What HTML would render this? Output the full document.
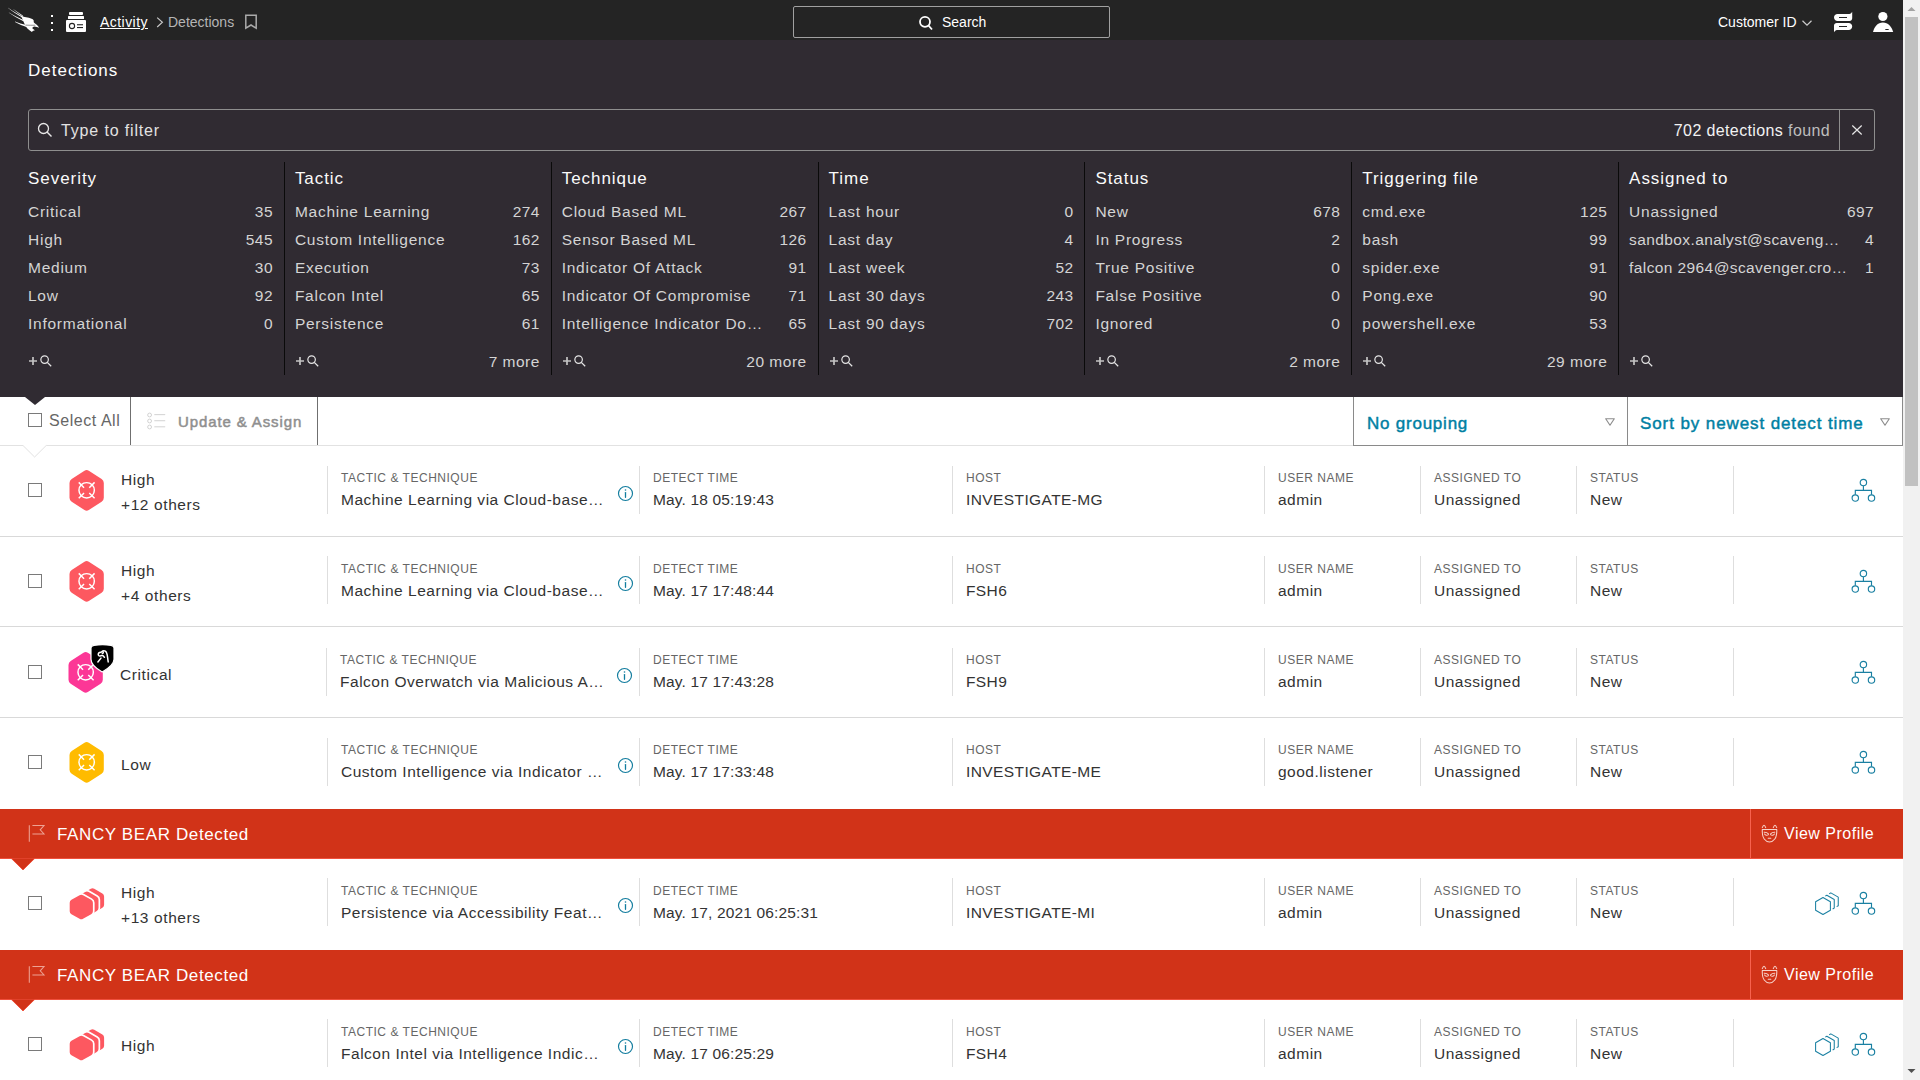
<!DOCTYPE html>
<html><head><meta charset="utf-8"><title>Detections</title>
<style>
*{box-sizing:border-box}
html,body{margin:0;padding:0}
body{width:1920px;height:1080px;overflow:hidden;background:#fff;position:relative;font-family:"Liberation Sans",sans-serif}
.t{position:absolute;white-space:nowrap;line-height:1}
svg{overflow:visible}
</style></head><body>
<div style="position:absolute;left:0px;top:0px;width:1903px;height:40px;background:#242424;"></div>
<svg style="position:absolute;left:4px;top:4px" width="40" height="32" viewBox="0 0 40 32">
<path fill="#fff" d="M4.1 3.8 Q10 8.2 19.8 13.1 L19.8 14.45 Q10 9.01 4.1 4.1 Z"/><path fill="#fff" d="M9.5 5.2 Q13.5 8.1 18.8 11.4 L18.8 12.55 Q13.5 8.79 9.5 5.5 Z"/><path fill="#fff" d="M4.9 8.4 Q11 12.2 19.4 15.9 L19.4 17.25 Q11 13.01 4.9 8.700000000000001 Z"/><path fill="#fff" d="M11.0 17.6 Q16 19.7 22.5 21.0 L22.5 22.9 Q16 20.84 11.0 17.900000000000002 Z"/>
<path fill="#fff" d="M17.2 12.2 C20 12.6 24 13.4 27.6 14.7 C29.4 15.4 30 16.4 29.7 17.6 C29.6 18.2 29.8 18.7 30.4 19.1 C32.2 20.3 34 21.8 35.1 23.7 C33.8 23.1 32.2 22.6 30.4 22.5 C29.4 22.6 28.6 23.2 28.3 24.2 C28.9 25 30 25.7 30.9 26.2 C29.8 26.4 28.7 26.8 27.9 27.9 C26.2 27 24.6 25.9 23.4 24.6 C22.2 23.3 21.4 21.9 20.8 20.6 C19.6 17.8 18.4 15 17.2 12.2 Z"/>
<path d="M21.4 21.1 C24.6 21.3 28 21.3 31.4 21.2" stroke="#242424" stroke-width="0.5" fill="none"/>
</svg>
<div style="position:absolute;left:51px;top:15px;width:2px;height:2px;background:#fff;box-shadow:0 0 0.4px #fff;"></div>
<div style="position:absolute;left:51px;top:22px;width:2px;height:2px;background:#fff;box-shadow:0 0 0.4px #fff;"></div>
<div style="position:absolute;left:51px;top:29px;width:2px;height:2px;background:#fff;box-shadow:0 0 0.4px #fff;"></div>
<svg style="position:absolute;left:66px;top:12px" width="20" height="20" viewBox="0 0 20 20">
<rect x="3" y="0" width="14" height="3" rx="1" fill="#fff"/>
<rect x="2" y="4" width="16" height="3" rx="0.5" fill="#fff"/>
<rect x="0" y="8" width="20" height="12" rx="1" fill="#fff"/>
<circle cx="6" cy="14" r="2.6" fill="none" stroke="#242424" stroke-width="1.1"/>
<rect x="11" y="12.2" width="6" height="1.1" fill="#242424"/>
<rect x="11" y="15" width="6" height="1.1" fill="#242424"/>
</svg>
<div class="t" style="top:15px;font-size:14px;color:#fff;letter-spacing:0.45px;left:100px;text-decoration:underline;text-underline-offset:0.5px;">Activity</div>
<svg style="position:absolute;left:156px;top:17px" width="8" height="11" viewBox="0 0 8 11"><path d="M1.2 0.6 L6.4 5.3 L1.2 10" fill="none" stroke="#c8c8c8" stroke-width="1.15"/></svg>
<div class="t" style="top:15px;font-size:14px;color:#b5b5b5;left:168px;">Detections</div>
<svg style="position:absolute;left:244px;top:14px" width="14" height="16" viewBox="0 0 14 16"><path d="M1.8 1.2 H12.2 V14.2 L7 11 L1.8 14.2 Z" fill="none" stroke="#aaa" stroke-width="1.5" stroke-linejoin="miter"/></svg>
<div style="position:absolute;left:793px;top:6px;width:317px;height:32px;background:transparent;border:1px solid #a0a0a0;border-radius:2px;box-sizing:border-box;"></div>
<svg style="position:absolute;left:918px;top:15px" width="16" height="16" viewBox="0 0 16 16"><circle cx="7" cy="6.8" r="5" fill="none" stroke="#fff" stroke-width="1.8"/><path d="M10.5 10.5 L14 14.5" stroke="#fff" stroke-width="1.8"/></svg>
<div class="t" style="top:15px;font-size:14px;color:#fff;left:942px;">Search</div>
<div class="t" style="top:15px;font-size:14px;color:#fff;left:1718px;">Customer ID</div>
<svg style="position:absolute;left:1801px;top:19px" width="12" height="8" viewBox="0 0 12 8"><path d="M1.5 1.8 L6 6.2 L10.5 1.8" fill="none" stroke="#ccc" stroke-width="1.2"/></svg>
<svg style="position:absolute;left:1833px;top:11px" width="20" height="22" viewBox="0 0 20 22">
<path fill="#fff" fill-rule="evenodd" d="M4.5 3 H16.4 C17.6 3 18.6 2 19.2 0.8 V7.2 C19.2 8.7 18 9.9 16.5 9.9 H4.5 C2.6 9.9 1 8.4 1 6.45 C1 4.5 2.6 3 4.5 3 Z M6 6 V6.9 H14 V6 Z"/>
<path fill="#fff" fill-rule="evenodd" d="M1 14.6 C1 13.1 2.2 12 3.7 12 H15.7 C17.6 12 19.2 13.5 19.2 15.45 C19.2 17.4 17.6 18.9 15.7 18.9 H3.9 C2.7 18.9 1.7 19.9 1 21.2 Z M6 15 V15.9 H14 V15 Z"/>
</svg>
<svg style="position:absolute;left:1873px;top:12px" width="21" height="21" viewBox="0 0 21 21">
<circle cx="9.9" cy="4.5" r="4.6" fill="#fff"/>
<path d="M0 20 C1.2 14.6 4.8 10.4 9.9 10.4 C15 10.4 18.8 14.6 20.2 20 Z" fill="#fff"/>
<rect x="12.2" y="16.9" width="3.6" height="1" rx="0.4" fill="#242424"/>
</svg>
<div style="position:absolute;left:0px;top:40px;width:1903px;height:357px;background:#302b32;"></div>
<div class="t" style="top:62px;font-size:17px;color:#fff;letter-spacing:1.0px;left:28px;">Detections</div>
<div style="position:absolute;left:28px;top:109px;width:1847px;height:42px;background:transparent;border:1px solid #8e8e8e;border-radius:3px;box-sizing:border-box;"></div>
<div style="position:absolute;left:1839px;top:110px;width:1px;height:40px;background:#8e8e8e;"></div>
<svg style="position:absolute;left:37px;top:122px" width="16" height="16" viewBox="0 0 16 16"><circle cx="6.5" cy="6.5" r="5" fill="none" stroke="#e8e8e8" stroke-width="1.3"/><path d="M10 10 L14.5 14.5" stroke="#e8e8e8" stroke-width="1.4"/></svg>
<div class="t" style="top:123px;font-size:16px;color:#e2e2e2;letter-spacing:0.85px;left:61px;">Type to filter</div>
<div class="t" style="top:123px;font-size:16px;color:#bdbdbd;letter-spacing:0.38px;left:1230px;width:600px;text-align:right;"><span style="color:#f2f2f2">702 detections</span> found</div>
<svg style="position:absolute;left:1851px;top:124px" width="12" height="12" viewBox="0 0 12 12"><path d="M1.3 1.5 L10.7 10.5 M10.7 1.5 L1.3 10.5" stroke="#e6e6e6" stroke-width="1.2"/></svg>
<div style="position:absolute;left:284px;top:162px;width:1px;height:213px;background:#0a0a0a;"></div>
<div class="t" style="top:170px;font-size:17px;color:#fafafa;letter-spacing:0.95px;left:28.0px;">Severity</div>
<div class="t" style="top:204px;font-size:15.5px;color:#d4d4d4;letter-spacing:0.45px;left:-327.0px;width:600px;text-align:right;">35</div>
<div class="t" style="top:204px;font-size:15.5px;color:#d4d4d4;letter-spacing:0.75px;left:28.0px;">Critical</div>
<div class="t" style="top:232px;font-size:15.5px;color:#d4d4d4;letter-spacing:0.45px;left:-327.0px;width:600px;text-align:right;">545</div>
<div class="t" style="top:232px;font-size:15.5px;color:#d4d4d4;letter-spacing:0.75px;left:28.0px;">High</div>
<div class="t" style="top:260px;font-size:15.5px;color:#d4d4d4;letter-spacing:0.45px;left:-327.0px;width:600px;text-align:right;">30</div>
<div class="t" style="top:260px;font-size:15.5px;color:#d4d4d4;letter-spacing:0.75px;left:28.0px;">Medium</div>
<div class="t" style="top:288px;font-size:15.5px;color:#d4d4d4;letter-spacing:0.45px;left:-327.0px;width:600px;text-align:right;">92</div>
<div class="t" style="top:288px;font-size:15.5px;color:#d4d4d4;letter-spacing:0.75px;left:28.0px;">Low</div>
<div class="t" style="top:316px;font-size:15.5px;color:#d4d4d4;letter-spacing:0.45px;left:-327.0px;width:600px;text-align:right;">0</div>
<div class="t" style="top:316px;font-size:15.5px;color:#d4d4d4;letter-spacing:0.75px;left:28.0px;">Informational</div>
<svg style="position:absolute;left:29px;top:355px" width="24" height="12" viewBox="0 0 24 12"><path d="M0 6 H8 M4 2 V10" stroke="#c4c4c4" stroke-width="1.7"/><circle cx="15.6" cy="4.6" r="3.75" fill="none" stroke="#e6e6e6" stroke-width="1.2"/><path d="M18.3 7.4 L22.2 11.2" stroke="#e6e6e6" stroke-width="1.3"/></svg>
<div style="position:absolute;left:551px;top:162px;width:1px;height:213px;background:#0a0a0a;"></div>
<div class="t" style="top:170px;font-size:17px;color:#fafafa;letter-spacing:0.95px;left:294.9px;">Tactic</div>
<div class="t" style="top:204px;font-size:15.5px;color:#d4d4d4;letter-spacing:0.45px;left:-60.10000000000002px;width:600px;text-align:right;">274</div>
<div class="t" style="top:204px;font-size:15.5px;color:#d4d4d4;letter-spacing:0.75px;left:294.9px;">Machine Learning</div>
<div class="t" style="top:232px;font-size:15.5px;color:#d4d4d4;letter-spacing:0.45px;left:-60.10000000000002px;width:600px;text-align:right;">162</div>
<div class="t" style="top:232px;font-size:15.5px;color:#d4d4d4;letter-spacing:0.75px;left:294.9px;">Custom Intelligence</div>
<div class="t" style="top:260px;font-size:15.5px;color:#d4d4d4;letter-spacing:0.45px;left:-60.10000000000002px;width:600px;text-align:right;">73</div>
<div class="t" style="top:260px;font-size:15.5px;color:#d4d4d4;letter-spacing:0.75px;left:294.9px;">Execution</div>
<div class="t" style="top:288px;font-size:15.5px;color:#d4d4d4;letter-spacing:0.45px;left:-60.10000000000002px;width:600px;text-align:right;">65</div>
<div class="t" style="top:288px;font-size:15.5px;color:#d4d4d4;letter-spacing:0.75px;left:294.9px;">Falcon Intel</div>
<div class="t" style="top:316px;font-size:15.5px;color:#d4d4d4;letter-spacing:0.45px;left:-60.10000000000002px;width:600px;text-align:right;">61</div>
<div class="t" style="top:316px;font-size:15.5px;color:#d4d4d4;letter-spacing:0.75px;left:294.9px;">Persistence</div>
<svg style="position:absolute;left:296px;top:355px" width="24" height="12" viewBox="0 0 24 12"><path d="M0 6 H8 M4 2 V10" stroke="#c4c4c4" stroke-width="1.7"/><circle cx="15.6" cy="4.6" r="3.75" fill="none" stroke="#e6e6e6" stroke-width="1.2"/><path d="M18.3 7.4 L22.2 11.2" stroke="#e6e6e6" stroke-width="1.3"/></svg>
<div class="t" style="top:354px;font-size:15.5px;color:#d4d4d4;letter-spacing:0.5px;left:-60.10000000000002px;width:600px;text-align:right;">7 more</div>
<div style="position:absolute;left:818px;top:162px;width:1px;height:213px;background:#0a0a0a;"></div>
<div class="t" style="top:170px;font-size:17px;color:#fafafa;letter-spacing:0.95px;left:561.7px;">Technique</div>
<div class="t" style="top:204px;font-size:15.5px;color:#d4d4d4;letter-spacing:0.45px;left:206.70000000000005px;width:600px;text-align:right;">267</div>
<div class="t" style="top:204px;font-size:15.5px;color:#d4d4d4;letter-spacing:0.75px;left:561.7px;">Cloud Based ML</div>
<div class="t" style="top:232px;font-size:15.5px;color:#d4d4d4;letter-spacing:0.45px;left:206.70000000000005px;width:600px;text-align:right;">126</div>
<div class="t" style="top:232px;font-size:15.5px;color:#d4d4d4;letter-spacing:0.75px;left:561.7px;">Sensor Based ML</div>
<div class="t" style="top:260px;font-size:15.5px;color:#d4d4d4;letter-spacing:0.45px;left:206.70000000000005px;width:600px;text-align:right;">91</div>
<div class="t" style="top:260px;font-size:15.5px;color:#d4d4d4;letter-spacing:0.75px;left:561.7px;">Indicator Of Attack</div>
<div class="t" style="top:288px;font-size:15.5px;color:#d4d4d4;letter-spacing:0.45px;left:206.70000000000005px;width:600px;text-align:right;">71</div>
<div class="t" style="top:288px;font-size:15.5px;color:#d4d4d4;letter-spacing:0.75px;left:561.7px;">Indicator Of Compromise</div>
<div class="t" style="top:316px;font-size:15.5px;color:#d4d4d4;letter-spacing:0.45px;left:206.70000000000005px;width:600px;text-align:right;">65</div>
<div class="t" style="top:316px;font-size:15.5px;color:#d4d4d4;letter-spacing:0.75px;left:561.7px;">Intelligence Indicator Do…</div>
<svg style="position:absolute;left:563px;top:355px" width="24" height="12" viewBox="0 0 24 12"><path d="M0 6 H8 M4 2 V10" stroke="#c4c4c4" stroke-width="1.7"/><circle cx="15.6" cy="4.6" r="3.75" fill="none" stroke="#e6e6e6" stroke-width="1.2"/><path d="M18.3 7.4 L22.2 11.2" stroke="#e6e6e6" stroke-width="1.3"/></svg>
<div class="t" style="top:354px;font-size:15.5px;color:#d4d4d4;letter-spacing:0.5px;left:206.70000000000005px;width:600px;text-align:right;">20 more</div>
<div style="position:absolute;left:1084px;top:162px;width:1px;height:213px;background:#0a0a0a;"></div>
<div class="t" style="top:170px;font-size:17px;color:#fafafa;letter-spacing:0.95px;left:828.6px;">Time</div>
<div class="t" style="top:204px;font-size:15.5px;color:#d4d4d4;letter-spacing:0.45px;left:473.5999999999999px;width:600px;text-align:right;">0</div>
<div class="t" style="top:204px;font-size:15.5px;color:#d4d4d4;letter-spacing:0.75px;left:828.6px;">Last hour</div>
<div class="t" style="top:232px;font-size:15.5px;color:#d4d4d4;letter-spacing:0.45px;left:473.5999999999999px;width:600px;text-align:right;">4</div>
<div class="t" style="top:232px;font-size:15.5px;color:#d4d4d4;letter-spacing:0.75px;left:828.6px;">Last day</div>
<div class="t" style="top:260px;font-size:15.5px;color:#d4d4d4;letter-spacing:0.45px;left:473.5999999999999px;width:600px;text-align:right;">52</div>
<div class="t" style="top:260px;font-size:15.5px;color:#d4d4d4;letter-spacing:0.75px;left:828.6px;">Last week</div>
<div class="t" style="top:288px;font-size:15.5px;color:#d4d4d4;letter-spacing:0.45px;left:473.5999999999999px;width:600px;text-align:right;">243</div>
<div class="t" style="top:288px;font-size:15.5px;color:#d4d4d4;letter-spacing:0.75px;left:828.6px;">Last 30 days</div>
<div class="t" style="top:316px;font-size:15.5px;color:#d4d4d4;letter-spacing:0.45px;left:473.5999999999999px;width:600px;text-align:right;">702</div>
<div class="t" style="top:316px;font-size:15.5px;color:#d4d4d4;letter-spacing:0.75px;left:828.6px;">Last 90 days</div>
<svg style="position:absolute;left:830px;top:355px" width="24" height="12" viewBox="0 0 24 12"><path d="M0 6 H8 M4 2 V10" stroke="#c4c4c4" stroke-width="1.7"/><circle cx="15.6" cy="4.6" r="3.75" fill="none" stroke="#e6e6e6" stroke-width="1.2"/><path d="M18.3 7.4 L22.2 11.2" stroke="#e6e6e6" stroke-width="1.3"/></svg>
<div style="position:absolute;left:1351px;top:162px;width:1px;height:213px;background:#0a0a0a;"></div>
<div class="t" style="top:170px;font-size:17px;color:#fafafa;letter-spacing:0.95px;left:1095.4px;">Status</div>
<div class="t" style="top:204px;font-size:15.5px;color:#d4d4d4;letter-spacing:0.45px;left:740.4000000000001px;width:600px;text-align:right;">678</div>
<div class="t" style="top:204px;font-size:15.5px;color:#d4d4d4;letter-spacing:0.75px;left:1095.4px;">New</div>
<div class="t" style="top:232px;font-size:15.5px;color:#d4d4d4;letter-spacing:0.45px;left:740.4000000000001px;width:600px;text-align:right;">2</div>
<div class="t" style="top:232px;font-size:15.5px;color:#d4d4d4;letter-spacing:0.75px;left:1095.4px;">In Progress</div>
<div class="t" style="top:260px;font-size:15.5px;color:#d4d4d4;letter-spacing:0.45px;left:740.4000000000001px;width:600px;text-align:right;">0</div>
<div class="t" style="top:260px;font-size:15.5px;color:#d4d4d4;letter-spacing:0.75px;left:1095.4px;">True Positive</div>
<div class="t" style="top:288px;font-size:15.5px;color:#d4d4d4;letter-spacing:0.45px;left:740.4000000000001px;width:600px;text-align:right;">0</div>
<div class="t" style="top:288px;font-size:15.5px;color:#d4d4d4;letter-spacing:0.75px;left:1095.4px;">False Positive</div>
<div class="t" style="top:316px;font-size:15.5px;color:#d4d4d4;letter-spacing:0.45px;left:740.4000000000001px;width:600px;text-align:right;">0</div>
<div class="t" style="top:316px;font-size:15.5px;color:#d4d4d4;letter-spacing:0.75px;left:1095.4px;">Ignored</div>
<svg style="position:absolute;left:1096px;top:355px" width="24" height="12" viewBox="0 0 24 12"><path d="M0 6 H8 M4 2 V10" stroke="#c4c4c4" stroke-width="1.7"/><circle cx="15.6" cy="4.6" r="3.75" fill="none" stroke="#e6e6e6" stroke-width="1.2"/><path d="M18.3 7.4 L22.2 11.2" stroke="#e6e6e6" stroke-width="1.3"/></svg>
<div class="t" style="top:354px;font-size:15.5px;color:#d4d4d4;letter-spacing:0.5px;left:740.4000000000001px;width:600px;text-align:right;">2 more</div>
<div style="position:absolute;left:1618px;top:162px;width:1px;height:213px;background:#0a0a0a;"></div>
<div class="t" style="top:170px;font-size:17px;color:#fafafa;letter-spacing:0.95px;left:1362.3px;">Triggering file</div>
<div class="t" style="top:204px;font-size:15.5px;color:#d4d4d4;letter-spacing:0.45px;left:1007.3px;width:600px;text-align:right;">125</div>
<div class="t" style="top:204px;font-size:15.5px;color:#d4d4d4;letter-spacing:0.75px;left:1362.3px;">cmd.exe</div>
<div class="t" style="top:232px;font-size:15.5px;color:#d4d4d4;letter-spacing:0.45px;left:1007.3px;width:600px;text-align:right;">99</div>
<div class="t" style="top:232px;font-size:15.5px;color:#d4d4d4;letter-spacing:0.75px;left:1362.3px;">bash</div>
<div class="t" style="top:260px;font-size:15.5px;color:#d4d4d4;letter-spacing:0.45px;left:1007.3px;width:600px;text-align:right;">91</div>
<div class="t" style="top:260px;font-size:15.5px;color:#d4d4d4;letter-spacing:0.75px;left:1362.3px;">spider.exe</div>
<div class="t" style="top:288px;font-size:15.5px;color:#d4d4d4;letter-spacing:0.45px;left:1007.3px;width:600px;text-align:right;">90</div>
<div class="t" style="top:288px;font-size:15.5px;color:#d4d4d4;letter-spacing:0.75px;left:1362.3px;">Pong.exe</div>
<div class="t" style="top:316px;font-size:15.5px;color:#d4d4d4;letter-spacing:0.45px;left:1007.3px;width:600px;text-align:right;">53</div>
<div class="t" style="top:316px;font-size:15.5px;color:#d4d4d4;letter-spacing:0.75px;left:1362.3px;">powershell.exe</div>
<svg style="position:absolute;left:1363px;top:355px" width="24" height="12" viewBox="0 0 24 12"><path d="M0 6 H8 M4 2 V10" stroke="#c4c4c4" stroke-width="1.7"/><circle cx="15.6" cy="4.6" r="3.75" fill="none" stroke="#e6e6e6" stroke-width="1.2"/><path d="M18.3 7.4 L22.2 11.2" stroke="#e6e6e6" stroke-width="1.3"/></svg>
<div class="t" style="top:354px;font-size:15.5px;color:#d4d4d4;letter-spacing:0.5px;left:1007.3px;width:600px;text-align:right;">29 more</div>
<div class="t" style="top:170px;font-size:17px;color:#fafafa;letter-spacing:0.95px;left:1629.1px;">Assigned to</div>
<div class="t" style="top:204px;font-size:15.5px;color:#d4d4d4;letter-spacing:0.45px;left:1274.1px;width:600px;text-align:right;">697</div>
<div class="t" style="top:204px;font-size:15.5px;color:#d4d4d4;letter-spacing:0.75px;left:1629.1px;">Unassigned</div>
<div class="t" style="top:232px;font-size:15.5px;color:#d4d4d4;letter-spacing:0.45px;left:1274.1px;width:600px;text-align:right;">4</div>
<div class="t" style="top:232px;font-size:15.5px;color:#d4d4d4;letter-spacing:0.4px;left:1629.1px;">sandbox.analyst@scaveng…</div>
<div class="t" style="top:260px;font-size:15.5px;color:#d4d4d4;letter-spacing:0.45px;left:1274.1px;width:600px;text-align:right;">1</div>
<div class="t" style="top:260px;font-size:15.5px;color:#d4d4d4;letter-spacing:0.4px;left:1629.1px;">falcon 2964@scavenger.cro…</div>
<svg style="position:absolute;left:1630px;top:355px" width="24" height="12" viewBox="0 0 24 12"><path d="M0 6 H8 M4 2 V10" stroke="#c4c4c4" stroke-width="1.7"/><circle cx="15.6" cy="4.6" r="3.75" fill="none" stroke="#e6e6e6" stroke-width="1.2"/><path d="M18.3 7.4 L22.2 11.2" stroke="#e6e6e6" stroke-width="1.3"/></svg>
<svg style="position:absolute;left:25px;top:397px" width="20" height="8" viewBox="0 0 20 8"><path d="M0 0 H20 L10 8 Z" fill="#302b32"/></svg>
<div style="position:absolute;left:28px;top:413px;width:14px;height:14px;background:#fff;border:1.3px solid #7a7a7a;box-sizing:border-box;"></div>
<div class="t" style="top:413px;font-size:16px;color:#666;letter-spacing:0.55px;left:49px;">Select All</div>
<div style="position:absolute;left:130px;top:397px;width:1px;height:48px;background:#6f6f6f;"></div>
<svg style="position:absolute;left:146px;top:412px" width="20" height="18" viewBox="0 0 20 18"><g fill="none" stroke="#d2d2d2" stroke-width="1"><circle cx="3.6" cy="3" r="1.9"/><circle cx="3.6" cy="9" r="1.9"/><circle cx="3.6" cy="15" r="1.9"/></g><g stroke="#d6d6d6" stroke-width="1.1"><path d="M8.3 2.6 H19.2"/><path d="M8.3 8.7 H19.2"/><path d="M8.3 14.8 H19.2"/></g></svg>
<div class="t" style="top:414px;font-size:15px;color:#8f8f8f;letter-spacing:0.88px;left:178px;-webkit-text-stroke:0.5px #8f8f8f;">Update &amp; Assign</div>
<div style="position:absolute;left:317px;top:397px;width:1px;height:48px;background:#6f6f6f;"></div>
<svg style="position:absolute;left:0px;top:440px" width="1353" height="20" viewBox="0 0 1353 20"><path d="M0 5.5 H23 L34.6 17 L46.2 5.5 H1353" fill="none" stroke="#e2e2e2" stroke-width="1"/></svg>
<div style="position:absolute;left:1353px;top:397px;width:550px;height:49px;background:transparent;border-left:1px solid #8a8a8a;border-bottom:1px solid #8a8a8a;border-right:1px solid #8a8a8a;box-sizing:border-box;"></div>
<div style="position:absolute;left:1627px;top:397px;width:1px;height:48px;background:#8a8a8a;"></div>
<div class="t" style="top:415px;font-size:17px;color:#007fa3;letter-spacing:0.77px;left:1367px;-webkit-text-stroke:0.45px #007fa3;">No grouping</div>
<div class="t" style="top:415px;font-size:17px;color:#007fa3;letter-spacing:0.9px;left:1640px;-webkit-text-stroke:0.45px #007fa3;">Sort by newest detect time</div>
<svg style="position:absolute;left:1604px;top:417px" width="12" height="10" viewBox="0 0 12 10"><path d="M1.7 1.7 H10.3 L6 8.2 Z" fill="none" stroke="#8d8d8d" stroke-width="1.15" stroke-linejoin="round"/></svg>
<svg style="position:absolute;left:1879px;top:417px" width="12" height="10" viewBox="0 0 12 10"><path d="M1.7 1.7 H10.3 L6 8.2 Z" fill="none" stroke="#8d8d8d" stroke-width="1.15" stroke-linejoin="round"/></svg>
<div style="position:absolute;left:28px;top:483px;width:14px;height:14px;background:#fff;border:1.3px solid #7a7a7a;box-sizing:border-box;"></div>
<svg style="position:absolute;left:69.8px;top:470px" width="34" height="41" viewBox="0 0 34 41"><path d="M18.84 0.80 L31.61 9.00 Q33.80 10.40 33.80 13.00 L33.80 27.70 Q33.80 30.30 31.62 31.71 L18.83 39.99 Q16.65 41.40 14.47 39.99 L1.68 31.71 Q-0.50 30.30 -0.50 27.70 L-0.50 13.00 Q-0.50 10.40 1.69 9.00 L14.46 0.80 Q16.65 -0.60 18.84 0.80 Z" fill="#fd5860"/><g fill="none" stroke="#fff" stroke-width="1.45"><circle cx="16.66" cy="20.3" r="7.7"/><path d="M19.28 22.92 L24.58 28.22 M14.04 22.92 L8.74 28.22 M14.04 17.68 L8.74 12.38 M19.28 17.68 L24.58 12.38 "/></g></svg>
<div class="t" style="top:472px;font-size:15.5px;color:#333;letter-spacing:0.6px;left:121px;">High</div>
<div class="t" style="top:497px;font-size:15.5px;color:#333;letter-spacing:0.6px;left:121px;">+12 others</div>
<div style="position:absolute;left:327px;top:466px;width:1px;height:48px;background:#dedede;"></div>
<div style="position:absolute;left:639px;top:466px;width:1px;height:48px;background:#dedede;"></div>
<div style="position:absolute;left:952px;top:466px;width:1px;height:48px;background:#dedede;"></div>
<div style="position:absolute;left:1264px;top:466px;width:1px;height:48px;background:#dedede;"></div>
<div style="position:absolute;left:1420px;top:466px;width:1px;height:48px;background:#dedede;"></div>
<div style="position:absolute;left:1576px;top:466px;width:1px;height:48px;background:#dedede;"></div>
<div style="position:absolute;left:1733px;top:466px;width:1px;height:48px;background:#dedede;"></div>
<div class="t" style="top:472px;font-size:12px;color:#666;letter-spacing:0.52px;left:341px;">TACTIC &amp; TECHNIQUE</div>
<div class="t" style="top:492px;font-size:15.5px;color:#333;letter-spacing:0.52px;left:341px;">Machine Learning via Cloud-base…</div>
<svg style="position:absolute;left:617px;top:485px" width="17" height="17" viewBox="0 0 17 17"><circle cx="8.5" cy="8.5" r="7" fill="none" stroke="#117c9e" stroke-width="1.15"/><path d="M8.5 7.6 V12.3" stroke="#117c9e" stroke-width="1.3" stroke-linecap="round"/><circle cx="8.5" cy="5" r="0.8" fill="#117c9e"/></svg>
<div class="t" style="top:472px;font-size:12px;color:#666;letter-spacing:0.52px;left:653px;">DETECT TIME</div>
<div class="t" style="top:492px;font-size:15.5px;color:#333;letter-spacing:0.15px;left:653px;">May. 18 05:19:43</div>
<div class="t" style="top:472px;font-size:12px;color:#666;letter-spacing:0.52px;left:966px;">HOST</div>
<div class="t" style="top:492px;font-size:15.5px;color:#333;letter-spacing:0.4px;left:966px;">INVESTIGATE-MG</div>
<div class="t" style="top:472px;font-size:12px;color:#666;letter-spacing:0.52px;left:1278px;">USER NAME</div>
<div class="t" style="top:492px;font-size:15.5px;color:#333;letter-spacing:0.5px;left:1278px;">admin</div>
<div class="t" style="top:472px;font-size:12px;color:#666;letter-spacing:0.52px;left:1434px;">ASSIGNED TO</div>
<div class="t" style="top:492px;font-size:15.5px;color:#333;letter-spacing:0.5px;left:1434px;">Unassigned</div>
<div class="t" style="top:472px;font-size:12px;color:#666;letter-spacing:0.52px;left:1590px;">STATUS</div>
<div class="t" style="top:492px;font-size:15.5px;color:#333;letter-spacing:0.5px;left:1590px;">New</div>
<svg style="position:absolute;left:1851px;top:476px" width="25" height="26" viewBox="0 0 25 26"><g fill="none" stroke="#1a80a2" stroke-width="1.15"><circle cx="12.4" cy="6.5" r="3.2"/><circle cx="4.3" cy="22" r="3.2"/><circle cx="20.5" cy="22" r="3.2"/><path d="M12.4 9.7 V14.3 M4.3 18.8 V14.3 H20.5 V18.8"/></g></svg>
<div style="position:absolute;left:28px;top:574px;width:14px;height:14px;background:#fff;border:1.3px solid #7a7a7a;box-sizing:border-box;"></div>
<svg style="position:absolute;left:69.8px;top:561px" width="34" height="41" viewBox="0 0 34 41"><path d="M18.84 0.80 L31.61 9.00 Q33.80 10.40 33.80 13.00 L33.80 27.70 Q33.80 30.30 31.62 31.71 L18.83 39.99 Q16.65 41.40 14.47 39.99 L1.68 31.71 Q-0.50 30.30 -0.50 27.70 L-0.50 13.00 Q-0.50 10.40 1.69 9.00 L14.46 0.80 Q16.65 -0.60 18.84 0.80 Z" fill="#fd5860"/><g fill="none" stroke="#fff" stroke-width="1.45"><circle cx="16.66" cy="20.3" r="7.7"/><path d="M19.28 22.92 L24.58 28.22 M14.04 22.92 L8.74 28.22 M14.04 17.68 L8.74 12.38 M19.28 17.68 L24.58 12.38 "/></g></svg>
<div class="t" style="top:563px;font-size:15.5px;color:#333;letter-spacing:0.6px;left:121px;">High</div>
<div class="t" style="top:588px;font-size:15.5px;color:#333;letter-spacing:0.6px;left:121px;">+4 others</div>
<div style="position:absolute;left:327px;top:556px;width:1px;height:48px;background:#dedede;"></div>
<div style="position:absolute;left:639px;top:556px;width:1px;height:48px;background:#dedede;"></div>
<div style="position:absolute;left:952px;top:556px;width:1px;height:48px;background:#dedede;"></div>
<div style="position:absolute;left:1264px;top:556px;width:1px;height:48px;background:#dedede;"></div>
<div style="position:absolute;left:1420px;top:556px;width:1px;height:48px;background:#dedede;"></div>
<div style="position:absolute;left:1576px;top:556px;width:1px;height:48px;background:#dedede;"></div>
<div style="position:absolute;left:1733px;top:556px;width:1px;height:48px;background:#dedede;"></div>
<div class="t" style="top:563px;font-size:12px;color:#666;letter-spacing:0.52px;left:341px;">TACTIC &amp; TECHNIQUE</div>
<div class="t" style="top:583px;font-size:15.5px;color:#333;letter-spacing:0.52px;left:341px;">Machine Learning via Cloud-base…</div>
<svg style="position:absolute;left:617px;top:575px" width="17" height="17" viewBox="0 0 17 17"><circle cx="8.5" cy="8.5" r="7" fill="none" stroke="#117c9e" stroke-width="1.15"/><path d="M8.5 7.6 V12.3" stroke="#117c9e" stroke-width="1.3" stroke-linecap="round"/><circle cx="8.5" cy="5" r="0.8" fill="#117c9e"/></svg>
<div class="t" style="top:563px;font-size:12px;color:#666;letter-spacing:0.52px;left:653px;">DETECT TIME</div>
<div class="t" style="top:583px;font-size:15.5px;color:#333;letter-spacing:0.15px;left:653px;">May. 17 17:48:44</div>
<div class="t" style="top:563px;font-size:12px;color:#666;letter-spacing:0.52px;left:966px;">HOST</div>
<div class="t" style="top:583px;font-size:15.5px;color:#333;letter-spacing:0.4px;left:966px;">FSH6</div>
<div class="t" style="top:563px;font-size:12px;color:#666;letter-spacing:0.52px;left:1278px;">USER NAME</div>
<div class="t" style="top:583px;font-size:15.5px;color:#333;letter-spacing:0.5px;left:1278px;">admin</div>
<div class="t" style="top:563px;font-size:12px;color:#666;letter-spacing:0.52px;left:1434px;">ASSIGNED TO</div>
<div class="t" style="top:583px;font-size:15.5px;color:#333;letter-spacing:0.5px;left:1434px;">Unassigned</div>
<div class="t" style="top:563px;font-size:12px;color:#666;letter-spacing:0.52px;left:1590px;">STATUS</div>
<div class="t" style="top:583px;font-size:15.5px;color:#333;letter-spacing:0.5px;left:1590px;">New</div>
<svg style="position:absolute;left:1851px;top:567px" width="25" height="26" viewBox="0 0 25 26"><g fill="none" stroke="#1a80a2" stroke-width="1.15"><circle cx="12.4" cy="6.5" r="3.2"/><circle cx="4.3" cy="22" r="3.2"/><circle cx="20.5" cy="22" r="3.2"/><path d="M12.4 9.7 V14.3 M4.3 18.8 V14.3 H20.5 V18.8"/></g></svg>
<div style="position:absolute;left:28px;top:665px;width:14px;height:14px;background:#fff;border:1.3px solid #7a7a7a;box-sizing:border-box;"></div>
<svg style="position:absolute;left:68.8px;top:652px" width="34" height="41" viewBox="0 0 34 41"><path d="M18.84 0.80 L31.61 9.00 Q33.80 10.40 33.80 13.00 L33.80 27.70 Q33.80 30.30 31.62 31.71 L18.83 39.99 Q16.65 41.40 14.47 39.99 L1.68 31.71 Q-0.50 30.30 -0.50 27.70 L-0.50 13.00 Q-0.50 10.40 1.69 9.00 L14.46 0.80 Q16.65 -0.60 18.84 0.80 Z" fill="#fc3796"/><g fill="none" stroke="#fff" stroke-width="1.45"><circle cx="16.66" cy="20.3" r="7.7"/><path d="M19.28 22.92 L24.58 28.22 M14.04 22.92 L8.74 28.22 M14.04 17.68 L8.74 12.38 M19.28 17.68 L24.58 12.38 "/></g><g transform="translate(22,-7.3)"><path d="M0 3.2 Q0 1 3 0.6 Q11.5 -0.6 20 0.6 Q23 1 23 3.2 V14.5 C23 19.5 16.5 24.2 11.2 27.2 C5.8 24.2 0 19.5 0 14.5 Z" fill="#000" stroke="#fff" stroke-width="1.2"/><g fill="none" stroke="#fff" stroke-width="1.5" stroke-linecap="round" stroke-linejoin="round"><path d="M6.9 17.3 L10 13.4"/><path d="M13.4 12.6 C12.6 11 10.6 10.6 8.8 11.4 C7.3 11 6.8 9.6 7.6 8.4 C8.4 7.6 9.6 7.4 10.6 7.2 C11.6 6.2 13 5.8 14.3 6.4 C15.6 7.2 16.2 9.4 16.5 12.2 L17.2 17.2"/><path d="M11.3 8.9 C12 8.6 12.4 8.1 12.3 7.3"/></g></g></svg>
<div class="t" style="top:667px;font-size:15.5px;color:#333;letter-spacing:0.6px;left:120px;">Critical</div>
<div style="position:absolute;left:326px;top:648px;width:1px;height:48px;background:#dedede;"></div>
<div style="position:absolute;left:639px;top:648px;width:1px;height:48px;background:#dedede;"></div>
<div style="position:absolute;left:952px;top:648px;width:1px;height:48px;background:#dedede;"></div>
<div style="position:absolute;left:1264px;top:648px;width:1px;height:48px;background:#dedede;"></div>
<div style="position:absolute;left:1420px;top:648px;width:1px;height:48px;background:#dedede;"></div>
<div style="position:absolute;left:1576px;top:648px;width:1px;height:48px;background:#dedede;"></div>
<div style="position:absolute;left:1733px;top:648px;width:1px;height:48px;background:#dedede;"></div>
<div class="t" style="top:654px;font-size:12px;color:#666;letter-spacing:0.52px;left:340px;">TACTIC &amp; TECHNIQUE</div>
<div class="t" style="top:674px;font-size:15.5px;color:#333;letter-spacing:0.52px;left:340px;">Falcon Overwatch via Malicious A…</div>
<svg style="position:absolute;left:616px;top:667px" width="17" height="17" viewBox="0 0 17 17"><circle cx="8.5" cy="8.5" r="7" fill="none" stroke="#117c9e" stroke-width="1.15"/><path d="M8.5 7.6 V12.3" stroke="#117c9e" stroke-width="1.3" stroke-linecap="round"/><circle cx="8.5" cy="5" r="0.8" fill="#117c9e"/></svg>
<div class="t" style="top:654px;font-size:12px;color:#666;letter-spacing:0.52px;left:653px;">DETECT TIME</div>
<div class="t" style="top:674px;font-size:15.5px;color:#333;letter-spacing:0.15px;left:653px;">May. 17 17:43:28</div>
<div class="t" style="top:654px;font-size:12px;color:#666;letter-spacing:0.52px;left:966px;">HOST</div>
<div class="t" style="top:674px;font-size:15.5px;color:#333;letter-spacing:0.4px;left:966px;">FSH9</div>
<div class="t" style="top:654px;font-size:12px;color:#666;letter-spacing:0.52px;left:1278px;">USER NAME</div>
<div class="t" style="top:674px;font-size:15.5px;color:#333;letter-spacing:0.5px;left:1278px;">admin</div>
<div class="t" style="top:654px;font-size:12px;color:#666;letter-spacing:0.52px;left:1434px;">ASSIGNED TO</div>
<div class="t" style="top:674px;font-size:15.5px;color:#333;letter-spacing:0.5px;left:1434px;">Unassigned</div>
<div class="t" style="top:654px;font-size:12px;color:#666;letter-spacing:0.52px;left:1590px;">STATUS</div>
<div class="t" style="top:674px;font-size:15.5px;color:#333;letter-spacing:0.5px;left:1590px;">New</div>
<svg style="position:absolute;left:1851px;top:658px" width="25" height="26" viewBox="0 0 25 26"><g fill="none" stroke="#1a80a2" stroke-width="1.15"><circle cx="12.4" cy="6.5" r="3.2"/><circle cx="4.3" cy="22" r="3.2"/><circle cx="20.5" cy="22" r="3.2"/><path d="M12.4 9.7 V14.3 M4.3 18.8 V14.3 H20.5 V18.8"/></g></svg>
<div style="position:absolute;left:28px;top:755px;width:14px;height:14px;background:#fff;border:1.3px solid #7a7a7a;box-sizing:border-box;"></div>
<svg style="position:absolute;left:69.8px;top:742px" width="34" height="41" viewBox="0 0 34 41"><path d="M18.84 0.80 L31.61 9.00 Q33.80 10.40 33.80 13.00 L33.80 27.70 Q33.80 30.30 31.62 31.71 L18.83 39.99 Q16.65 41.40 14.47 39.99 L1.68 31.71 Q-0.50 30.30 -0.50 27.70 L-0.50 13.00 Q-0.50 10.40 1.69 9.00 L14.46 0.80 Q16.65 -0.60 18.84 0.80 Z" fill="#ffbb00"/><g fill="none" stroke="#fff" stroke-width="1.45"><circle cx="16.66" cy="20.3" r="7.7"/><path d="M19.28 22.92 L24.58 28.22 M14.04 22.92 L8.74 28.22 M14.04 17.68 L8.74 12.38 M19.28 17.68 L24.58 12.38 "/></g></svg>
<div class="t" style="top:757px;font-size:15.5px;color:#333;letter-spacing:0.6px;left:121px;">Low</div>
<div style="position:absolute;left:327px;top:738px;width:1px;height:48px;background:#dedede;"></div>
<div style="position:absolute;left:639px;top:738px;width:1px;height:48px;background:#dedede;"></div>
<div style="position:absolute;left:952px;top:738px;width:1px;height:48px;background:#dedede;"></div>
<div style="position:absolute;left:1264px;top:738px;width:1px;height:48px;background:#dedede;"></div>
<div style="position:absolute;left:1420px;top:738px;width:1px;height:48px;background:#dedede;"></div>
<div style="position:absolute;left:1576px;top:738px;width:1px;height:48px;background:#dedede;"></div>
<div style="position:absolute;left:1733px;top:738px;width:1px;height:48px;background:#dedede;"></div>
<div class="t" style="top:744px;font-size:12px;color:#666;letter-spacing:0.52px;left:341px;">TACTIC &amp; TECHNIQUE</div>
<div class="t" style="top:764px;font-size:15.5px;color:#333;letter-spacing:0.52px;left:341px;">Custom Intelligence via Indicator …</div>
<svg style="position:absolute;left:617px;top:757px" width="17" height="17" viewBox="0 0 17 17"><circle cx="8.5" cy="8.5" r="7" fill="none" stroke="#117c9e" stroke-width="1.15"/><path d="M8.5 7.6 V12.3" stroke="#117c9e" stroke-width="1.3" stroke-linecap="round"/><circle cx="8.5" cy="5" r="0.8" fill="#117c9e"/></svg>
<div class="t" style="top:744px;font-size:12px;color:#666;letter-spacing:0.52px;left:653px;">DETECT TIME</div>
<div class="t" style="top:764px;font-size:15.5px;color:#333;letter-spacing:0.15px;left:653px;">May. 17 17:33:48</div>
<div class="t" style="top:744px;font-size:12px;color:#666;letter-spacing:0.52px;left:966px;">HOST</div>
<div class="t" style="top:764px;font-size:15.5px;color:#333;letter-spacing:0.4px;left:966px;">INVESTIGATE-ME</div>
<div class="t" style="top:744px;font-size:12px;color:#666;letter-spacing:0.52px;left:1278px;">USER NAME</div>
<div class="t" style="top:764px;font-size:15.5px;color:#333;letter-spacing:0.5px;left:1278px;">good.listener</div>
<div class="t" style="top:744px;font-size:12px;color:#666;letter-spacing:0.52px;left:1434px;">ASSIGNED TO</div>
<div class="t" style="top:764px;font-size:15.5px;color:#333;letter-spacing:0.5px;left:1434px;">Unassigned</div>
<div class="t" style="top:744px;font-size:12px;color:#666;letter-spacing:0.52px;left:1590px;">STATUS</div>
<div class="t" style="top:764px;font-size:15.5px;color:#333;letter-spacing:0.5px;left:1590px;">New</div>
<svg style="position:absolute;left:1851px;top:748px" width="25" height="26" viewBox="0 0 25 26"><g fill="none" stroke="#1a80a2" stroke-width="1.15"><circle cx="12.4" cy="6.5" r="3.2"/><circle cx="4.3" cy="22" r="3.2"/><circle cx="20.5" cy="22" r="3.2"/><path d="M12.4 9.7 V14.3 M4.3 18.8 V14.3 H20.5 V18.8"/></g></svg>
<div style="position:absolute;left:28px;top:896px;width:14px;height:14px;background:#fff;border:1.3px solid #7a7a7a;box-sizing:border-box;"></div>
<svg style="position:absolute;left:70.26px;top:888.1px" width="36" height="32" viewBox="0 0 36 32"><path d="M24.23 0.75 L32.37 5.45 Q34.10 6.45 34.10 8.45 L34.10 16.75 Q34.10 18.75 32.37 19.75 L24.23 24.45 Q22.50 25.45 20.77 24.45 L12.63 19.75 Q10.90 18.75 10.90 16.75 L10.90 8.45 Q10.90 6.45 12.63 5.45 L20.77 0.75 Q22.50 -0.25 24.23 0.75 Z" fill="#fd5860" stroke="#fff" stroke-width="3.4" stroke-linejoin="round" paint-order="stroke"/><path d="M18.63 3.95 L26.77 8.65 Q28.50 9.65 28.50 11.65 L28.50 19.95 Q28.50 21.95 26.77 22.95 L18.63 27.65 Q16.90 28.65 15.17 27.65 L7.03 22.95 Q5.30 21.95 5.30 19.95 L5.30 11.65 Q5.30 9.65 7.03 8.65 L15.17 3.95 Q16.90 2.95 18.63 3.95 Z" fill="#fd5860" stroke="#fff" stroke-width="3.4" stroke-linejoin="round" paint-order="stroke"/><path d="M13.03 7.15 L21.17 11.85 Q22.90 12.85 22.90 14.85 L22.90 23.15 Q22.90 25.15 21.17 26.15 L13.03 30.85 Q11.30 31.85 9.57 30.85 L1.43 26.15 Q-0.30 25.15 -0.30 23.15 L-0.30 14.85 Q-0.30 12.85 1.43 11.85 L9.57 7.15 Q11.30 6.15 13.03 7.15 Z" fill="#fd5860" stroke="#fff" stroke-width="3.4" stroke-linejoin="round" paint-order="stroke"/></svg>
<div class="t" style="top:885px;font-size:15.5px;color:#333;letter-spacing:0.6px;left:121px;">High</div>
<div class="t" style="top:910px;font-size:15.5px;color:#333;letter-spacing:0.6px;left:121px;">+13 others</div>
<div style="position:absolute;left:327px;top:878px;width:1px;height:48px;background:#dedede;"></div>
<div style="position:absolute;left:639px;top:878px;width:1px;height:48px;background:#dedede;"></div>
<div style="position:absolute;left:952px;top:878px;width:1px;height:48px;background:#dedede;"></div>
<div style="position:absolute;left:1264px;top:878px;width:1px;height:48px;background:#dedede;"></div>
<div style="position:absolute;left:1420px;top:878px;width:1px;height:48px;background:#dedede;"></div>
<div style="position:absolute;left:1576px;top:878px;width:1px;height:48px;background:#dedede;"></div>
<div style="position:absolute;left:1733px;top:878px;width:1px;height:48px;background:#dedede;"></div>
<div class="t" style="top:885px;font-size:12px;color:#666;letter-spacing:0.52px;left:341px;">TACTIC &amp; TECHNIQUE</div>
<div class="t" style="top:905px;font-size:15.5px;color:#333;letter-spacing:0.52px;left:341px;">Persistence via Accessibility Feat…</div>
<svg style="position:absolute;left:617px;top:897px" width="17" height="17" viewBox="0 0 17 17"><circle cx="8.5" cy="8.5" r="7" fill="none" stroke="#117c9e" stroke-width="1.15"/><path d="M8.5 7.6 V12.3" stroke="#117c9e" stroke-width="1.3" stroke-linecap="round"/><circle cx="8.5" cy="5" r="0.8" fill="#117c9e"/></svg>
<div class="t" style="top:885px;font-size:12px;color:#666;letter-spacing:0.52px;left:653px;">DETECT TIME</div>
<div class="t" style="top:905px;font-size:15.5px;color:#333;letter-spacing:0.15px;left:653px;">May. 17, 2021 06:25:31</div>
<div class="t" style="top:885px;font-size:12px;color:#666;letter-spacing:0.52px;left:966px;">HOST</div>
<div class="t" style="top:905px;font-size:15.5px;color:#333;letter-spacing:0.4px;left:966px;">INVESTIGATE-MI</div>
<div class="t" style="top:885px;font-size:12px;color:#666;letter-spacing:0.52px;left:1278px;">USER NAME</div>
<div class="t" style="top:905px;font-size:15.5px;color:#333;letter-spacing:0.5px;left:1278px;">admin</div>
<div class="t" style="top:885px;font-size:12px;color:#666;letter-spacing:0.52px;left:1434px;">ASSIGNED TO</div>
<div class="t" style="top:905px;font-size:15.5px;color:#333;letter-spacing:0.5px;left:1434px;">Unassigned</div>
<div class="t" style="top:885px;font-size:12px;color:#666;letter-spacing:0.52px;left:1590px;">STATUS</div>
<div class="t" style="top:905px;font-size:15.5px;color:#333;letter-spacing:0.5px;left:1590px;">New</div>
<svg style="position:absolute;left:1851px;top:889px" width="25" height="26" viewBox="0 0 25 26"><g fill="none" stroke="#1a80a2" stroke-width="1.15"><circle cx="12.4" cy="6.5" r="3.2"/><circle cx="4.3" cy="22" r="3.2"/><circle cx="20.5" cy="22" r="3.2"/><path d="M12.4 9.7 V14.3 M4.3 18.8 V14.3 H20.5 V18.8"/></g></svg>
<svg style="position:absolute;left:1814px;top:891.9px" width="26" height="26" viewBox="0 0 26 26"><g fill="none" stroke="#1a80a2" stroke-width="1.05" stroke-linejoin="round"><polygon points="9.00,5.50 16.40,9.70 16.40,18.30 9.00,22.50 1.60,18.30 1.60,9.70"/><path d="M11.25 4.15 L12.85 3.25 L20.25 7.45 L20.25 16.05 L18.65 16.95"/><path d="M15.25 1.80 L16.85 0.90 L24.25 5.10 L24.25 13.70 L22.65 14.60"/></g></svg>
<div style="position:absolute;left:28px;top:1037px;width:14px;height:14px;background:#fff;border:1.3px solid #7a7a7a;box-sizing:border-box;"></div>
<svg style="position:absolute;left:70.26px;top:1029.1px" width="36" height="32" viewBox="0 0 36 32"><path d="M24.23 0.75 L32.37 5.45 Q34.10 6.45 34.10 8.45 L34.10 16.75 Q34.10 18.75 32.37 19.75 L24.23 24.45 Q22.50 25.45 20.77 24.45 L12.63 19.75 Q10.90 18.75 10.90 16.75 L10.90 8.45 Q10.90 6.45 12.63 5.45 L20.77 0.75 Q22.50 -0.25 24.23 0.75 Z" fill="#fd5860" stroke="#fff" stroke-width="3.4" stroke-linejoin="round" paint-order="stroke"/><path d="M18.63 3.95 L26.77 8.65 Q28.50 9.65 28.50 11.65 L28.50 19.95 Q28.50 21.95 26.77 22.95 L18.63 27.65 Q16.90 28.65 15.17 27.65 L7.03 22.95 Q5.30 21.95 5.30 19.95 L5.30 11.65 Q5.30 9.65 7.03 8.65 L15.17 3.95 Q16.90 2.95 18.63 3.95 Z" fill="#fd5860" stroke="#fff" stroke-width="3.4" stroke-linejoin="round" paint-order="stroke"/><path d="M13.03 7.15 L21.17 11.85 Q22.90 12.85 22.90 14.85 L22.90 23.15 Q22.90 25.15 21.17 26.15 L13.03 30.85 Q11.30 31.85 9.57 30.85 L1.43 26.15 Q-0.30 25.15 -0.30 23.15 L-0.30 14.85 Q-0.30 12.85 1.43 11.85 L9.57 7.15 Q11.30 6.15 13.03 7.15 Z" fill="#fd5860" stroke="#fff" stroke-width="3.4" stroke-linejoin="round" paint-order="stroke"/></svg>
<div class="t" style="top:1038px;font-size:15.5px;color:#333;letter-spacing:0.6px;left:121px;">High</div>
<div style="position:absolute;left:327px;top:1019px;width:1px;height:48px;background:#dedede;"></div>
<div style="position:absolute;left:639px;top:1019px;width:1px;height:48px;background:#dedede;"></div>
<div style="position:absolute;left:952px;top:1019px;width:1px;height:48px;background:#dedede;"></div>
<div style="position:absolute;left:1264px;top:1019px;width:1px;height:48px;background:#dedede;"></div>
<div style="position:absolute;left:1420px;top:1019px;width:1px;height:48px;background:#dedede;"></div>
<div style="position:absolute;left:1576px;top:1019px;width:1px;height:48px;background:#dedede;"></div>
<div style="position:absolute;left:1733px;top:1019px;width:1px;height:48px;background:#dedede;"></div>
<div class="t" style="top:1026px;font-size:12px;color:#666;letter-spacing:0.52px;left:341px;">TACTIC &amp; TECHNIQUE</div>
<div class="t" style="top:1046px;font-size:15.5px;color:#333;letter-spacing:0.52px;left:341px;">Falcon Intel via Intelligence Indic…</div>
<svg style="position:absolute;left:617px;top:1038px" width="17" height="17" viewBox="0 0 17 17"><circle cx="8.5" cy="8.5" r="7" fill="none" stroke="#117c9e" stroke-width="1.15"/><path d="M8.5 7.6 V12.3" stroke="#117c9e" stroke-width="1.3" stroke-linecap="round"/><circle cx="8.5" cy="5" r="0.8" fill="#117c9e"/></svg>
<div class="t" style="top:1026px;font-size:12px;color:#666;letter-spacing:0.52px;left:653px;">DETECT TIME</div>
<div class="t" style="top:1046px;font-size:15.5px;color:#333;letter-spacing:0.15px;left:653px;">May. 17 06:25:29</div>
<div class="t" style="top:1026px;font-size:12px;color:#666;letter-spacing:0.52px;left:966px;">HOST</div>
<div class="t" style="top:1046px;font-size:15.5px;color:#333;letter-spacing:0.4px;left:966px;">FSH4</div>
<div class="t" style="top:1026px;font-size:12px;color:#666;letter-spacing:0.52px;left:1278px;">USER NAME</div>
<div class="t" style="top:1046px;font-size:15.5px;color:#333;letter-spacing:0.5px;left:1278px;">admin</div>
<div class="t" style="top:1026px;font-size:12px;color:#666;letter-spacing:0.52px;left:1434px;">ASSIGNED TO</div>
<div class="t" style="top:1046px;font-size:15.5px;color:#333;letter-spacing:0.5px;left:1434px;">Unassigned</div>
<div class="t" style="top:1026px;font-size:12px;color:#666;letter-spacing:0.52px;left:1590px;">STATUS</div>
<div class="t" style="top:1046px;font-size:15.5px;color:#333;letter-spacing:0.5px;left:1590px;">New</div>
<svg style="position:absolute;left:1851px;top:1030px" width="25" height="26" viewBox="0 0 25 26"><g fill="none" stroke="#1a80a2" stroke-width="1.15"><circle cx="12.4" cy="6.5" r="3.2"/><circle cx="4.3" cy="22" r="3.2"/><circle cx="20.5" cy="22" r="3.2"/><path d="M12.4 9.7 V14.3 M4.3 18.8 V14.3 H20.5 V18.8"/></g></svg>
<svg style="position:absolute;left:1814px;top:1032.9px" width="26" height="26" viewBox="0 0 26 26"><g fill="none" stroke="#1a80a2" stroke-width="1.05" stroke-linejoin="round"><polygon points="9.00,5.50 16.40,9.70 16.40,18.30 9.00,22.50 1.60,18.30 1.60,9.70"/><path d="M11.25 4.15 L12.85 3.25 L20.25 7.45 L20.25 16.05 L18.65 16.95"/><path d="M15.25 1.80 L16.85 0.90 L24.25 5.10 L24.25 13.70 L22.65 14.60"/></g></svg>
<div style="position:absolute;left:0px;top:536px;width:1903px;height:1px;background:#d9d9d9;"></div>
<div style="position:absolute;left:0px;top:626px;width:1903px;height:1px;background:#d9d9d9;"></div>
<div style="position:absolute;left:0px;top:717px;width:1903px;height:1px;background:#d9d9d9;"></div>
<div style="position:absolute;left:0px;top:808.67px;width:1903px;height:50px;background:#d13318;"></div>
<div style="position:absolute;left:0px;top:857.67px;width:1903px;height:1px;background:#f0503c;"></div>
<svg style="position:absolute;left:11px;top:857.67px" width="24" height="13" viewBox="0 0 24 13"><path d="M0 0.5 H24 L12 12 Z" fill="#d13318"/><path d="M0.5 0.5 L12 12 L23.5 0.5" fill="none" stroke="#f0503c" stroke-width="0.9"/></svg>
<svg style="position:absolute;left:28px;top:823.67px" width="18" height="19" viewBox="0 0 18 19"><g fill="none" stroke="#eda293" stroke-width="1.05"><path d="M1.3 1.3 V17.8"/><path d="M4.4 1.5 H16 L12.2 5.8 L16 10 H4.4"/></g></svg>
<div class="t" style="top:825.87px;font-size:17px;color:#fff;letter-spacing:0.62px;left:57px;">FANCY BEAR Detected</div>
<div style="position:absolute;left:1750px;top:808.67px;width:1px;height:49px;background:#f8624e;"></div>
<svg style="position:absolute;left:1756px;top:820.0px" width="26" height="26" viewBox="0 0 26 26"><g fill="none" stroke="#f6d2ca" stroke-width="1.05" stroke-linecap="round" stroke-linejoin="round"><path d="M6.3 7.6 C6.9 6 7.4 5.3 8 5.3 C8.6 5.3 9.1 6 9.7 7.6 M17.3 7.6 C17.9 6 18.4 5.3 19 5.3 C19.6 5.3 20.1 6 20.7 7.6"/><path d="M6.3 9.4 H20.8 C20.9 13 20.6 16.5 18.8 19 C17.2 21.2 15.4 21.9 13.5 21.9 C11.6 21.9 9.8 21.2 8.2 19 C6.4 16.5 6.1 13 6.3 9.4 Z"/><path d="M8.2 12.3 C10 12.2 11.4 12.8 12.4 13.8 M18.8 12.3 C17 12.2 15.6 12.8 14.6 13.8"/><path d="M8.6 14 C9.4 15.4 11 15.8 12.5 14.6 M18.4 14 C17.6 15.4 16 15.8 14.5 14.6"/><path d="M12.2 18.3 H14.8"/></g></svg>
<div class="t" style="top:826.4699999999999px;font-size:16px;color:#fff;letter-spacing:0.5px;left:1784px;">View Profile</div>
<div style="position:absolute;left:0px;top:949.67px;width:1903px;height:50px;background:#d13318;"></div>
<div style="position:absolute;left:0px;top:998.67px;width:1903px;height:1px;background:#f0503c;"></div>
<svg style="position:absolute;left:11px;top:998.67px" width="24" height="13" viewBox="0 0 24 13"><path d="M0 0.5 H24 L12 12 Z" fill="#d13318"/><path d="M0.5 0.5 L12 12 L23.5 0.5" fill="none" stroke="#f0503c" stroke-width="0.9"/></svg>
<svg style="position:absolute;left:28px;top:964.67px" width="18" height="19" viewBox="0 0 18 19"><g fill="none" stroke="#eda293" stroke-width="1.05"><path d="M1.3 1.3 V17.8"/><path d="M4.4 1.5 H16 L12.2 5.8 L16 10 H4.4"/></g></svg>
<div class="t" style="top:966.87px;font-size:17px;color:#fff;letter-spacing:0.62px;left:57px;">FANCY BEAR Detected</div>
<div style="position:absolute;left:1750px;top:949.67px;width:1px;height:49px;background:#f8624e;"></div>
<svg style="position:absolute;left:1756px;top:961.0px" width="26" height="26" viewBox="0 0 26 26"><g fill="none" stroke="#f6d2ca" stroke-width="1.05" stroke-linecap="round" stroke-linejoin="round"><path d="M6.3 7.6 C6.9 6 7.4 5.3 8 5.3 C8.6 5.3 9.1 6 9.7 7.6 M17.3 7.6 C17.9 6 18.4 5.3 19 5.3 C19.6 5.3 20.1 6 20.7 7.6"/><path d="M6.3 9.4 H20.8 C20.9 13 20.6 16.5 18.8 19 C17.2 21.2 15.4 21.9 13.5 21.9 C11.6 21.9 9.8 21.2 8.2 19 C6.4 16.5 6.1 13 6.3 9.4 Z"/><path d="M8.2 12.3 C10 12.2 11.4 12.8 12.4 13.8 M18.8 12.3 C17 12.2 15.6 12.8 14.6 13.8"/><path d="M8.6 14 C9.4 15.4 11 15.8 12.5 14.6 M18.4 14 C17.6 15.4 16 15.8 14.5 14.6"/><path d="M12.2 18.3 H14.8"/></g></svg>
<div class="t" style="top:967.4699999999999px;font-size:16px;color:#fff;letter-spacing:0.5px;left:1784px;">View Profile</div>
<div style="position:absolute;left:1903px;top:0px;width:17px;height:1080px;background:#f1f1f1;"></div>
<div style="position:absolute;left:1905px;top:17px;width:13px;height:469px;background:#c1c1c1;"></div>
<svg style="position:absolute;left:1903px;top:0px" width="17" height="17" viewBox="0 0 17 17"><path d="M4.5 11 L8.5 7 L12.5 11 Z" fill="#a3a3a3"/></svg>
<svg style="position:absolute;left:1903px;top:1063px" width="17" height="17" viewBox="0 0 17 17"><path d="M4.5 6 L8.5 10 L12.5 6 Z" fill="#505050"/></svg>
</body></html>
